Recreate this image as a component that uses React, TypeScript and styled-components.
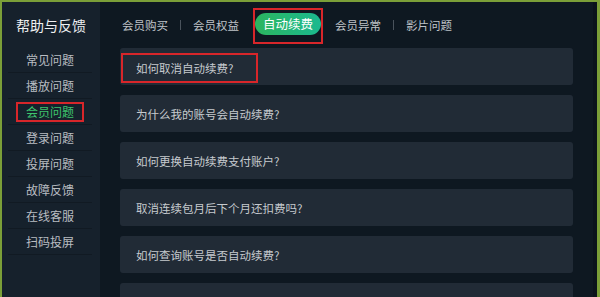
import React from "react";
import styled, { createGlobalStyle } from "styled-components";

const GlobalStyle = createGlobalStyle`
    html, body {
        margin: 0;
        padding: 0;
        background: #0e1821;
    }
    body {
        font-family: "Noto Sans CJK SC", "Noto Sans", sans-serif;
    }
`;

const sideItems = [
    "常见问题",
    "播放问题",
    "会员问题",
    "登录问题",
    "投屏问题",
    "故障反馈",
    "在线客服",
    "扫码投屏",
];

const questions = [
    "如何取消自动续费?",
    "为什么我的账号会自动续费?",
    "如何更换自动续费支付账户?",
    "取消连续包月后下个月还扣费吗?",
    "如何查询账号是否自动续费?",
    "自动续费状态下再开通连续包月或包季后，自动续费还会扣费吗?",
];

const App = () => {
    return (
        <>
            <GlobalStyle />
            <Frame>
                <Sidebar>
                    <SideTitle>帮助与反馈</SideTitle>
                    <SideList>
                        {sideItems.map((item) => (
                            <SideItem key={item}>
                                {item === "会员问题" ? (
                                    <Marked $active>{item}</Marked>
                                ) : (
                                    <SideText>{item}</SideText>
                                )}
                            </SideItem>
                        ))}
                    </SideList>
                </Sidebar>

                <Main>
                    <Tabs>
                        <Tab>会员购买</Tab>
                        <TabDivider />
                        <Tab>会员权益</Tab>
                        <PillMark>
                            <Pill>自动续费</Pill>
                        </PillMark>
                        <Tab>会员异常</Tab>
                        <TabDivider />
                        <Tab>影片问题</Tab>
                    </Tabs>

                    <Cards>
                        {questions.map((q, i) => (
                            <Card key={q} $marked={i === 0}>
                                {i === 0 ? (
                                    <QuestionMark>{q}</QuestionMark>
                                ) : (
                                    <Question>{q}</Question>
                                )}
                            </Card>
                        ))}
                    </Cards>
                </Main>
            </Frame>
        </>
    );
};

const Frame = styled.div`
    box-sizing: border-box;
    width: 600px;
    height: 297px;
    overflow: hidden;
    display: flex;
    border-top: 2px solid #7b9f38;
    border-left: 2px solid #7b9f38;
    border-right: 3px solid #7b9f38;
    background: #0e1821;
`;

const Sidebar = styled.aside`
    width: 98px;
    flex-shrink: 0;
    background: #16212c;
    display: flex;
    flex-direction: column;
    align-items: stretch;
`;

const SideTitle = styled.div`
    text-align: center;
    color: #eef0f2;
    font-size: 14px;
    line-height: 20px;
    margin-top: 13px;
    margin-bottom: 12px;
`;

const SideList = styled.ul`
    list-style: none;
    margin: 0;
    padding: 0 8px 0 6px;
`;

const SideItem = styled.li`
    height: 26px;
    display: flex;
    align-items: center;
    justify-content: center;
    border-bottom: 1px solid #111a23;
    box-sizing: border-box;
`;

const SideText = styled.span`
    color: #b9bdc2;
    font-size: 12px;
    line-height: 14px;
`;

const Marked = styled.span<{ $active?: boolean }>`
    display: inline-block;
    color: ${(p) => (p.$active ? "#3ec46d" : "#b9bdc2")};
    font-size: 12px;
    line-height: 14px;
    padding: 1px 8px;
    border: 2px solid #d8262a;
`;

const Main = styled.main`
    flex: 1;
    display: flex;
    flex-direction: column;
    padding: 6px 24px 0 20px;
    min-width: 0;
    box-shadow: inset -4px 0 0 #0b131b;
`;

const Tabs = styled.nav`
    display: flex;
    align-items: center;
    gap: 12px;
    height: 36px;
    padding-left: 2px;
`;

const Tab = styled.span`
    color: #bfc3c8;
    font-size: 11.5px;
    line-height: 14px;
    padding-bottom: 3px;
`;

const TabDivider = styled.span`
    width: 1px;
    height: 10px;
    background: #4a535c;
    margin-bottom: 3px;
`;

const PillMark = styled.div`
    border: 2px solid #d8262a;
    padding: 3px 0 7px;
    margin-left: 2px;
`;

const Pill = styled.div`
    height: 22px;
    padding: 0 8px;
    border-radius: 11px;
    background: linear-gradient(90deg, #2cb55f, #1bb98f);
    color: #ffffff;
    font-size: 12.5px;
    line-height: 22px;
`;

const Cards = styled.div`
    display: flex;
    flex-direction: column;
    gap: 10px;
    margin-top: 4px;
`;

const Card = styled.div<{ $marked?: boolean }>`
    box-sizing: border-box;
    height: 37px;
    background: #212b36;
    border-radius: 3px;
    display: flex;
    align-items: ${(p) => (p.$marked ? "flex-start" : "center")};
    padding: ${(p) => (p.$marked ? "5px 0 0 1px" : "0 0 0 16px")};
    flex-shrink: 0;
`;

const Question = styled.span`
    color: #c6cace;
    font-size: 11.5px;
    line-height: 14px;
    white-space: nowrap;
`;

const QuestionMark = styled.span`
    box-sizing: border-box;
    width: 137px;
    height: 30px;
    border: 2px solid #d8262a;
    padding-left: 13px;
    display: flex;
    align-items: center;
    color: #c6cace;
    font-size: 11.5px;
    white-space: nowrap;
`;

export default App;
